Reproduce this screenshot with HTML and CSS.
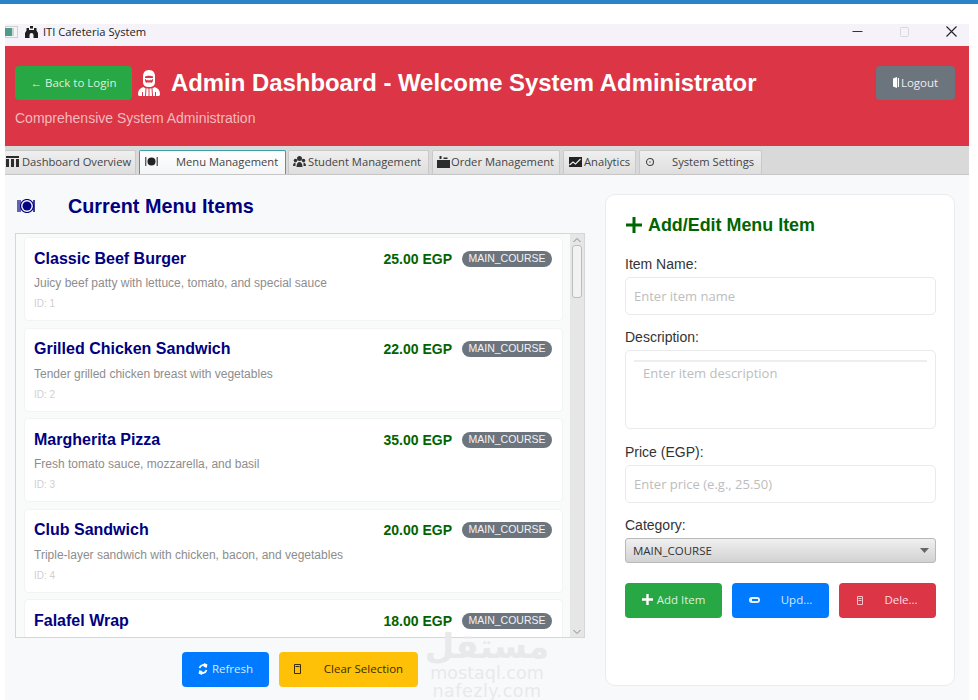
FILE: index.html
```html
<!DOCTYPE html>
<html lang="en">
<head>
<meta charset="utf-8">
<title>ITI Cafeteria System</title>
<link rel="stylesheet" href="styles.css">
</head>
<body>
<div class="screen-top"></div>
<div class="window">
  <div class="titlebar">
    <div class="title-left">
      <svg class="app-icon" width="13" height="12" viewBox="0 0 13 12"><rect x="0.5" y="0.5" width="12" height="11" fill="#f4f4f4" stroke="#d0d0d0"/><rect x="0" y="2" width="7" height="8" fill="#4f9a8b"/><rect x="7" y="2" width="2" height="8" fill="#c9d6d3"/></svg>
      <svg class="castle-icon" width="13" height="12" viewBox="0 0 13 12"><path fill="#1f1f1f" d="M5 0h3v2.500H5zM1.500 2h2.500v2h5V2h2.500v2.500L13 7v5H8.500V9a2 2 0 0 0-4 0v3H0V7l1.500-2.500z"/></svg>
      <span class="title-text">ITI Cafeteria System</span>
    </div>
    <div class="win-controls">
      <svg width="11" height="11" viewBox="0 0 11 11"><path d="M0.500 5.500h10" stroke="#333" stroke-width="1"/></svg>
      <svg width="9" height="10" viewBox="0 0 9 10"><rect x="0.500" y="0.500" width="8" height="9" rx="1" fill="none" stroke="#d8d8dc"/></svg>
      <svg width="11" height="11" viewBox="0 0 11 11"><path d="M0.500 0.500l10 10M10.500 0.500l-10 10" stroke="#222" stroke-width="1.100"/></svg>
    </div>
  </div>

  <header class="header">
    <div class="header-row">
      <div class="header-left">
        <button class="btn btn-green btn-back">← Back to Login</button>
        <svg class="admin-icon" width="22" height="26" viewBox="0 0 22 26">
          <path fill="#fff" d="M11 0c4 0 6 2.800 6 6.500V12c0 3-2 5-6 5s-6-2-6-5V6.500C5 2.800 7 0 11 0z"/>
          <path fill="#dc3545" d="M7 6.500c2-1 6-1 8 0V10c0 2.500-1.800 3.500-4 3.500S7 12.500 7 10z"/>
          <path fill="none" stroke="#fff" stroke-width="1.100" d="M6.500 8.500h9M8 8.500a1.500 1.300 0 0 0 3 0M11 8.500a1.500 1.300 0 0 0 3 0"/>
          <path fill="#fff" d="M8.500 12.500h5l-1 2.500h-3z"/>
          <path fill="#fff" d="M5.500 17c-3.500 1-5.500 3.500-5.500 7 0 1 .5 2 1.500 2h19c1 0 1.500-1 1.500-2 0-3.500-2-6-5.500-7l-2 1.500H7.500z"/>
          <path fill="none" stroke="#dc3545" stroke-width="1" d="M8 18.500L7.500 26M14 18.500l.5 7.500M11 18v8M4.500 22v4M17.500 22v4"/>
        </svg>
        <h1 class="header-title">Admin Dashboard - Welcome System Administrator</h1>
      </div>
      <button class="btn btn-gray btn-logout">
        <svg width="6" height="11" viewBox="0 0 6 11"><path fill="#fff" d="M0 1.500L4 0v11L0 9.500zM4.800 1H6v9H4.800z"/></svg>
        Logout
      </button>
    </div>
    <p class="header-sub">Comprehensive System Administration</p>
  </header>

  <nav class="tabs">
    <div class="tab tab-overview">
      <svg width="13" height="11" viewBox="0 0 13 11"><path fill="#2c2c2c" d="M0 0h13v2H0zM0 3h3v8H0zM5 3h3v8H5zM10 3h3v8h-3z"/></svg>
      <span>Dashboard Overview</span>
    </div>
    <div class="tab tab-active tab-menu">
      <svg width="13" height="9" viewBox="0 0 13 9"><circle cx="6.500" cy="4.500" r="4" fill="#222"/><path d="M0.800 0v9M12.200 0v9" stroke="#222"/></svg>
      <span>Menu Management</span>
    </div>
    <div class="tab tab-student">
      <svg width="13" height="11" viewBox="0 0 13 11"><circle cx="6.500" cy="2.500" r="2.500" fill="#333"/><circle cx="2.500" cy="4.500" r="1.800" fill="#333"/><circle cx="10.500" cy="4.500" r="1.800" fill="#333"/><path fill="#333" d="M3.500 11c0-3.500 1.300-5 3-5s3 1.500 3 5zM0 10c0-2 1-3.500 2.500-3.500L2.500 10zM13 10c0-2-1-3.500-2.500-3.500l0 3.500z"/></svg>
      <span>Student Management</span>
    </div>
    <div class="tab tab-order">
      <svg width="13" height="12" viewBox="0 0 13 12"><path fill="#2c2c2c" d="M0 4h13v8H0zM2.500 0h2v3h-2zM6.500 1.500h4V3h-4z"/></svg>
      <span>Order Management</span>
    </div>
    <div class="tab tab-analytics">
      <svg width="13" height="10" viewBox="0 0 13 10"><rect width="13" height="10" fill="#222"/><path d="M0.500 8l3.500-3 2.500 2 5-5" stroke="#eee" stroke-width="1.100" fill="none"/></svg>
      <span>Analytics</span>
    </div>
    <div class="tab tab-settings">
      <svg width="10" height="10" viewBox="0 0 10 10"><circle cx="5" cy="5" r="3.500" fill="none" stroke="#444" stroke-width="1.100"/><circle cx="5" cy="5" r="1" fill="#999"/></svg>
      <span>System Settings</span>
    </div>
  </nav>

  <main class="content">
    <section class="left">
      <div class="section-title">
        <svg width="18" height="14" viewBox="0 0 18 14"><circle cx="10" cy="7" r="6.500" fill="none" stroke="#000080" stroke-width="1.200"/><circle cx="10" cy="7" r="4.500" fill="#000080"/><path d="M1 1v12M3 1v12" stroke="#000080" stroke-width="1.200"/><path d="M17 1v12" stroke="#000080" stroke-width="1.500"/></svg>
        <h2>Current Menu Items</h2>
      </div>

      <div class="list">
        <div class="cards">
          <article class="card">
            <div class="card-top"><h3>Classic Beef Burger</h3><div class="card-meta"><span class="price">25.00 EGP</span><span class="badge">MAIN_COURSE</span></div></div>
            <p class="desc">Juicy beef patty with lettuce, tomato, and special sauce</p>
            <p class="item-id">ID: 1</p>
          </article>
          <article class="card">
            <div class="card-top"><h3>Grilled Chicken Sandwich</h3><div class="card-meta"><span class="price">22.00 EGP</span><span class="badge">MAIN_COURSE</span></div></div>
            <p class="desc">Tender grilled chicken breast with vegetables</p>
            <p class="item-id">ID: 2</p>
          </article>
          <article class="card">
            <div class="card-top"><h3>Margherita Pizza</h3><div class="card-meta"><span class="price">35.00 EGP</span><span class="badge">MAIN_COURSE</span></div></div>
            <p class="desc">Fresh tomato sauce, mozzarella, and basil</p>
            <p class="item-id">ID: 3</p>
          </article>
          <article class="card">
            <div class="card-top"><h3>Club Sandwich</h3><div class="card-meta"><span class="price">20.00 EGP</span><span class="badge">MAIN_COURSE</span></div></div>
            <p class="desc">Triple-layer sandwich with chicken, bacon, and vegetables</p>
            <p class="item-id">ID: 4</p>
          </article>
          <article class="card">
            <div class="card-top"><h3>Falafel Wrap</h3><div class="card-meta"><span class="price">18.00 EGP</span><span class="badge">MAIN_COURSE</span></div></div>
          </article>
        </div>
        <div class="scrollbar">
          <svg width="10" height="6" viewBox="0 0 10 6"><path d="M1.500 5L5 1.500 8.500 5" fill="none" stroke="#8a8a8a"/></svg>
          <div class="thumb"></div>
          <svg class="arrow-down" width="10" height="6" viewBox="0 0 10 6"><path d="M1.500 1L5 4.500 8.500 1" fill="none" stroke="#8a8a8a"/></svg>
        </div>
      </div>

      <div class="list-actions">
        <button class="btn btn-blue btn-refresh">
          <svg width="10" height="12" viewBox="0 0 10 12"><path d="M8.500 3.500A4 4 0 0 0 1.500 5M1.500 8.500A4 4 0 0 0 8.500 7" fill="none" stroke="#fff" stroke-width="1.700"/><path fill="#fff" d="M6 0l3.500 1.500L8.500 5 5.500 3.500zM4 12L.5 10.500 1.500 7l3 1.500z"/></svg>
          Refresh
        </button>
        <button class="btn btn-yellow btn-clear">
          <svg width="7" height="11" viewBox="0 0 7 11"><path fill="none" stroke="#3a2c00" d="M0.500 1.500h6v9h-6zM1.500 3.500h4"/></svg>
          <span>Clear Selection</span>
        </button>
      </div>
    </section>

    <aside class="form-card">
      <h2 class="form-title"><svg width="16" height="16" viewBox="0 0 16 16"><path fill="#006400" d="M6.500 0h3v6.500H16v3H9.500V16h-3V9.500H0v-3h6.500z"/></svg>Add/Edit Menu Item</h2>
      <label class="field-label" for="item-name">Item Name:</label>
      <input id="item-name" class="field-input" placeholder="Enter item name">
      <label class="field-label" for="item-desc">Description:</label>
      <div class="textarea-box"><textarea id="item-desc" class="field-area" placeholder="Enter item description"></textarea></div>
      <label class="field-label" for="item-price">Price (EGP):</label>
      <input id="item-price" class="field-input" placeholder="Enter price (e.g., 25.50)">
      <label class="field-label" for="item-cat">Category:</label>
      <div class="select-box">
        <select id="item-cat" class="field-select"><option>MAIN_COURSE</option></select>
        <svg class="select-arrow" width="9" height="5" viewBox="0 0 9 5"><path fill="#666" d="M0 0h9L4.500 5z"/></svg>
      </div>
      <div class="form-actions">
        <button class="btn btn-green btn-form">
          <svg width="11" height="11" viewBox="0 0 11 11"><path fill="#fff" d="M4.300 0h2.400v4.300H11v2.400H6.700V11H4.300V6.700H0V4.300h4.300z"/></svg>
          <span>Add Item</span>
        </button>
        <button class="btn btn-blue btn-form btn-wide-gap">
          <svg width="11" height="6" viewBox="0 0 11 6"><rect width="11" height="6" rx="3" fill="#e8f2ff"/><rect x="3" y="2" width="6" height="2" fill="#007bff"/></svg>
          <span>Upd...</span>
        </button>
        <button class="btn btn-red btn-form btn-wide-gap">
          <svg width="6" height="10" viewBox="0 0 6 10"><path fill="none" stroke="#f6c4c9" d="M.5 1.500h5v8h-5zM1.500 3.500h3M1.500 5.500h3"/></svg>
          <span>Dele...</span>
        </button>
      </div>
    </aside>
  </main>
</div>

<div class="watermark" aria-hidden="true">
  <span class="wm-ar">مستقل</span>
  <span class="wm-a">mostaql.com</span>
  <span class="wm-b">nafezly.com</span>
</div>
</body>
</html>
```

FILE: styles.css
```css
* { box-sizing: border-box; }
html, body { margin: 0; padding: 0; height: 700px; overflow: hidden; background: #fff; }
body { font-family: "Open Sans", sans-serif; position: relative; }
h1, h2, h3, p { margin: 0; }

.screen-top { height: 4px; background: #2a84c6; }

.window {
  width: 964px;
  height: 676px;
  margin: 20px 0 0 5px;
  display: flex;
  flex-direction: column;
  background: #f8f9fa;
}

.titlebar {
  height: 22px;
  flex: none;
  background: #f5f2f9;
  display: flex;
  align-items: flex-start;
  justify-content: space-between;
  padding: 2px 12px 0 0;
}
.title-left { display: flex; align-items: center; height: 12px; }
.castle-icon { margin-left: 7px; }
.title-text { margin-left: 5px; font-size: 11.200px; line-height: 12px; color: #222; }
.win-controls { display: flex; align-items: center; gap: 37px; }

.header {
  height: 100px;
  flex: none;
  background: #dc3545;
  padding: 20px 14px 0 10px;
}
.header-row { display: flex; justify-content: space-between; align-items: center; height: 34px; }
.header-left { display: flex; align-items: center; }
.admin-icon { margin-left: 6px; }
.header-title {
  margin-left: 11px;
  font: bold 23.900px "Liberation Sans", sans-serif;
  color: #fff;
  white-space: nowrap;
}
.header-sub {
  margin-top: 9px;
  font: 14px/18px "Liberation Sans", sans-serif;
  color: #f3b9be;
}

.btn {
  border: 0;
  border-radius: 4px;
  color: #fff;
  font: 11.500px "Open Sans", sans-serif;
  display: inline-flex;
  align-items: center;
  justify-content: center;
  padding: 0 0 2px;
}
.btn-green { background: #28a745; color: #d9f2df; }
.btn-gray { background: #6c757d; color: #eceef0; }
.btn-blue { background: #007bff; color: #d6e9ff; }
.btn-red { background: #dc3545; color: #fbdfe2; }
.btn-yellow { background: #ffc107; color: #3a2c00; }
.btn-back { width: 117px; height: 34px; }
.btn-logout { width: 79px; height: 34px; gap: 2px; }

.tabs {
  height: 29px;
  flex: none;
  background: #d9d9d9;
  border-bottom: 1px solid #c6c6c6;
  display: flex;
  align-items: flex-end;
}
.tab {
  height: 24px;
  margin-right: 3px;
  padding-bottom: 2px;
  display: flex;
  align-items: center;
  background: linear-gradient(#efefef, #dedede);
  border: 1px solid #c9c9c9;
  border-bottom: 0;
  border-radius: 2px 2px 0 0;
  font-size: 11.200px;
  color: #444;
  white-space: nowrap;
  gap: 3px;
  padding-left: 4px;
}
.tab-overview { width: 131px; border-left: 0; padding-left: 1px; }
.tab-active {
  background: linear-gradient(#fff, #f3f5f6);
  border: 1px solid #3c9fb0;
  border-bottom: 0;
}
.tab-menu { width: 147px; gap: 18px; padding-left: 5px; margin-right: 2px; }
.tab-student { width: 141px; padding-left: 4px; gap: 2px; }
.tab-order { width: 128px; padding-left: 4px; gap: 1px; }
.tab-analytics { width: 73px; padding-left: 5px; gap: 2px; }
.tab-settings { width: 123px; gap: 17px; padding-left: 5px; }

.content { flex: 1; display: flex; padding-left: 10px; min-height: 0; }
.left { width: 570px; flex: none; padding-top: 20px; }
.section-title { display: flex; align-items: center; height: 22px; padding-left: 2px; margin-bottom: 16px; }
.section-title h2 {
  margin-left: 33px;
  font: bold 19.800px "Liberation Sans", sans-serif;
  color: #000080;
}

.list {
  height: 405px;
  background: #f9fafa;
  border: 1px solid #d6d6d6;
  display: flex;
  overflow: hidden;
}
.cards { flex: 1; padding: 3px 7px 0 8px; display: flex; flex-direction: column; gap: 6.600px; min-width: 0; }
.card {
  flex: none;
  height: 84px;
  background: #fff;
  border: 1px solid #f2f3f4;
  border-radius: 4px;
  padding: 12px 10px 0 9px;
}
.card-top { display: flex; justify-content: space-between; align-items: center; height: 17px; }
.card h3 { font: bold 16px "Liberation Sans", sans-serif; color: #000080; }
.card-meta { display: flex; align-items: center; gap: 10px; }
.price { font: bold 14px "Liberation Sans", sans-serif; color: #006400; }
.badge {
  width: 90px;
  height: 16px;
  border-radius: 8px;
  background: #6c757d;
  color: #f2f3f4;
  font: 10.500px/15px "Liberation Sans", sans-serif;
  text-align: center;
}
.desc { margin-top: 9px; font: 12px/15px "Liberation Sans", sans-serif; color: #8d8d8d; }
.item-id { margin-top: 6px; font: 10px/13px "Liberation Sans", sans-serif; color: #d0d0d0; }

.scrollbar {
  width: 14px;
  flex: none;
  background: #e6e6e6;
  display: flex;
  flex-direction: column;
  align-items: center;
  padding-top: 3px;
}
.thumb {
  width: 10px;
  height: 53px;
  margin-top: 2px;
  background: #f2f2f2;
  border: 1px solid #bdbdbd;
  border-radius: 3px;
}
.arrow-down { margin-top: auto; margin-bottom: 2px; }

.list-actions { display: flex; justify-content: center; gap: 10px; margin-top: 14px; }
.btn-refresh { width: 87px; height: 35px; gap: 4px; }
.btn-clear { width: 139px; height: 35px; gap: 23px; }

.form-card {
  width: 350px;
  height: 492px;
  flex: none;
  margin: 19px 0 0 20px;
  background: #fff;
  border: 1px solid #e9ebed;
  border-radius: 10px;
  padding: 19px 18px 0 19px;
}
.form-title {
  display: flex;
  align-items: center;
  gap: 6px;
  padding-left: 1px;
  font: bold 17.900px/22px "Liberation Sans", sans-serif;
  color: #006400;
  margin-bottom: 20px;
}
.field-label {
  display: block;
  font: 14px/16px "Liberation Sans", sans-serif;
  color: #333;
  margin-bottom: 5px;
}
.field-input {
  display: block;
  width: 100%;
  height: 38px;
  border: 1px solid #e8eaec;
  border-radius: 5px;
  padding: 0 8px;
  margin-bottom: 14px;
  font: 13px "Open Sans", sans-serif;
  background: #fff;
  outline: 0;
}
.field-input::placeholder, .field-area::placeholder { color: #bdbdbd; opacity: 1; }
.textarea-box {
  height: 79px;
  border: 1px solid #e8eaec;
  border-radius: 5px;
  padding: 9px 8px 0;
  margin-bottom: 15px;
}
.field-area {
  display: block;
  width: 100%;
  height: 60px;
  border: 0;
  border-top: 2px solid #eeeeee;
  padding: 2px 9px;
  resize: none;
  outline: 0;
  font: 13px "Open Sans", sans-serif;
}
.select-box { position: relative; height: 25px; margin-bottom: 20px; }
.field-select {
  appearance: none;
  width: 100%;
  height: 25px;
  border: 1px solid #b9b9b9;
  border-radius: 3px;
  background: linear-gradient(#f0f0f0, #d2d2d2);
  padding: 0 7px;
  font: 11.500px "Open Sans", sans-serif;
  color: #333;
}
.select-arrow { position: absolute; right: 7px; top: 10px; }
.form-actions { display: flex; justify-content: space-between; }
.btn-form { width: 97px; height: 35px; gap: 4px; }
.btn-wide-gap { gap: 21px; }

.watermark {
  position: absolute;
  left: 428px;
  top: 628px;
  width: 118px;
  height: 72px;
  display: flex;
  flex-direction: column;
  align-items: center;
  color: #e8e9ea;
  font-family: "DejaVu Sans", sans-serif;
  pointer-events: none;
}
.wm-ar { font: bold 34px/36px "DejaVu Sans", sans-serif; }
.wm-a { font-size: 17.500px; line-height: 18px; }
.wm-b { font-size: 17.500px; line-height: 18px; letter-spacing: 0.5px; }
```
